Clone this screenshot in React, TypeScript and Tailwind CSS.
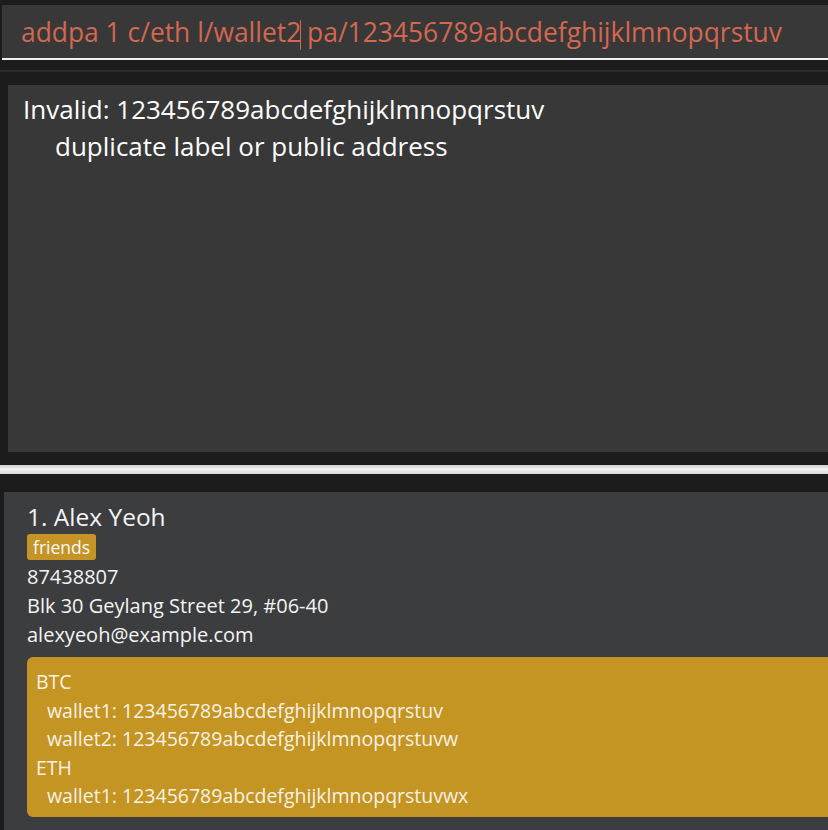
const font = { fontFamily: '"Comic Sans MS", "Open Sans", "DejaVu Sans", sans-serif' };

const wallets = [
  { coin: "BTC", items: ["wallet1: 123456789abcdefghijklmnopqrstuv", "wallet2: 123456789abcdefghijklmnopqrstuvw"] },
  { coin: "ETH", items: ["wallet1: 123456789abcdefghijklmnopqrstuvwx"] },
];

const App = () => {
  return (
    <div className="w-[828px] h-[830px] overflow-hidden bg-[#1c1c1c] flex flex-col" style={font}>
      {/* command box */}
      <div className="mt-[5px] ml-[2px] h-[55px] bg-[#383838] border-b-2 border-[#f0f0f0] flex items-center pl-[19px] pt-[6px]">
        <span className="text-[26.4px] text-[#d4674f] whitespace-nowrap leading-none">
          addpa 1 c/eth l/wallet2<span className="inline-block w-px h-[30px] bg-[#d4674f] align-middle -mx-px"></span> pa/123456789abcdefghijklmnopqrstuv
        </span>
      </div>
      <div className="mt-[10px] h-[2px] bg-[#2b2b2b]"></div>

      {/* result box */}
      <div className="mt-[13px] ml-[8px] h-[367px] bg-[#383838] pl-[15px] pt-[6px] text-white text-[26px] leading-[37px]">
        <div className="whitespace-nowrap">Invalid: 123456789abcdefghijklmnopqrstuv</div>
        <div className="whitespace-nowrap pl-[32px]">duplicate label or public address</div>
      </div>

      {/* splitter */}
      <div className="mt-[13px] h-[9px] bg-gradient-to-b from-[#cfcfcf] via-[#f2f2f2] to-[#d6d6d6]"></div>

      {/* list */}
      <div className="mt-[18px] ml-[4px] flex-1 bg-[#3c3d3f] pl-[23px] pt-[10px] text-[#f4f4f4]">
        <div className="text-[24.5px] leading-[30px] whitespace-nowrap">1. Alex Yeoh</div>
        <div className="mt-[2px] flex">
          <span className="bg-[#c49526] rounded-[3px] px-[6px] h-[26px] flex items-center text-[17.5px] text-[#f8f8f8]">friends</span>
        </div>
        <div className="mt-[2px] text-[20px] leading-[29px] whitespace-nowrap">
          <div>87438807</div>
          <div>Blk 30 Geylang Street 29, #06-40</div>
          <div>alexyeoh@example.com</div>
        </div>
        <div className="mt-[8px] -mr-[20px] h-[160px] bg-[#c49522] rounded-[6px] pl-[9px] pt-[11px] text-[19.5px] leading-[28.5px] text-[#f6f1e4]">
          {wallets.map((w) => (
            <div key={w.coin}>
              <div>{w.coin}</div>
              {w.items.map((it) => (
                <div key={it} className="pl-[11px] whitespace-nowrap">{it}</div>
              ))}
            </div>
          ))}
        </div>
      </div>
    </div>
  );
};

export default App;
